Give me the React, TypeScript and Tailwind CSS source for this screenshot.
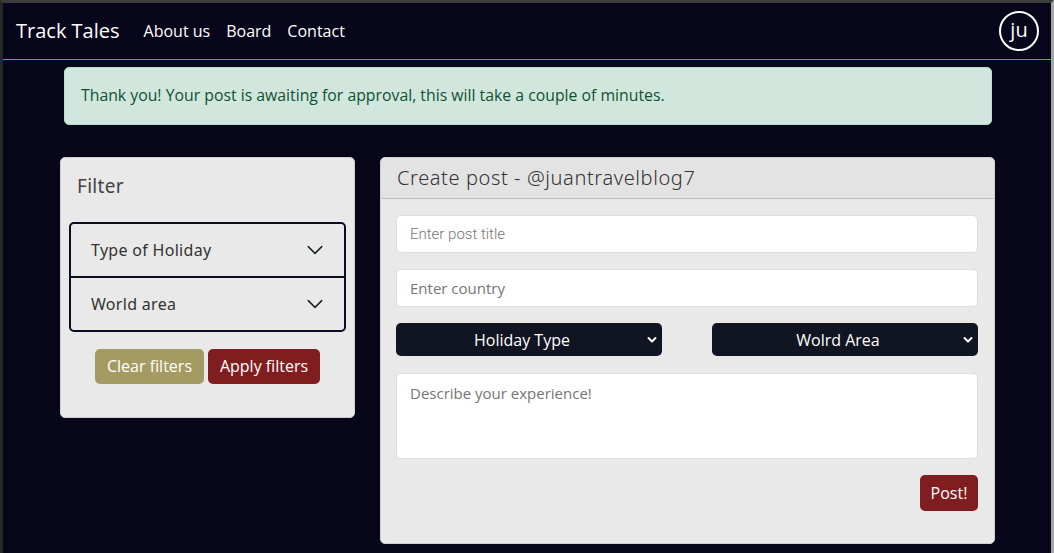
import React from "react";

const quick = { fontFamily: '"Open Sans", "Noto Sans", sans-serif' };
const mont = { fontFamily: '"Noto Sans", "Open Sans", sans-serif' };

function Chevron() {
  return (
    <svg width="18" height="18" viewBox="0 0 16 16" fill="none" stroke="#212529" strokeWidth="1.4" strokeLinecap="round" strokeLinejoin="round">
      <path d="M2 5l6 6 6-6" />
    </svg>
  );
}

function SmallChevron() {
  return (
    <svg width="10" height="8" viewBox="0 0 10 8" fill="none" stroke="#fff" strokeWidth="2" strokeLinecap="round" strokeLinejoin="round">
      <path d="M1.5 2l3.5 3.5L8.5 2" />
    </svg>
  );
}

function DarkSelect({ label }: { label: string }) {
  return (
    <div className="relative flex h-[33px] w-[266px] items-center justify-center rounded-[5px] bg-[#111522] pr-[14px] text-[16px] text-white">
      <span>{label}</span>
      <span className="absolute right-[5px] top-[13px] flex">
        <SmallChevron />
      </span>
    </div>
  );
}

export default function App() {
  return (
    <div
      className="h-[553px] w-[1054px] overflow-hidden border-t-[3px] border-r-[3px] border-l-[3px] border-t-[#3c3c3c] border-r-[#a6a6a6] border-l-[#262926] bg-[#07061a]"
      style={quick}
    >
      <nav className="flex h-[57px] items-center border-b border-[#c8704f] pl-[13px] pr-[12px] text-white">
        <span className="text-[20px]">Track Tales</span>
        <div className="ml-[24px] flex gap-[16px] text-[16px]">
          <span>About us</span>
          <span>Board</span>
          <span>Contact</span>
        </div>
        <div className="ml-auto flex h-[40px] w-[40px] items-center justify-center rounded-full border-2 border-white pb-[2px] text-[20px]">
          ju
        </div>
      </nav>

      <div className="ml-[61px] mt-[7px] flex h-[58px] w-[928px] items-center rounded-[5px] border border-[#badbcc] bg-[#d1e7dd] px-[16px] text-[15.8px] text-[#0f5132]">
        Thank you! Your post is awaiting for approval, this will take a couple of minutes.
      </div>

      <div className="ml-[57px] mt-[32px] flex items-start gap-[25px]">
        <div className="h-[261px] w-[295px] rounded-[5px] border border-[#d0d0d0] bg-[#e9e9e9] px-[8px]" style={mont}>
          <div className="pl-[8px] pt-[14px] text-[19px] tracking-[0.3px] text-[#444]">Filter</div>
          <div className="mt-[21px] overflow-hidden rounded-[5px] border-2 border-[#0c0c20]">
            <div className="flex h-[54px] items-center justify-between border-b-2 border-[#0c0c20] pl-[20px] pr-[20px] text-[16px] tracking-[0.3px] text-[#333]">
              <span>Type of Holiday</span>
              <Chevron />
            </div>
            <div className="flex h-[52px] items-center justify-between pl-[20px] pr-[20px] text-[16px] tracking-[0.3px] text-[#333]">
              <span>World area</span>
              <Chevron />
            </div>
          </div>
          <div className="mt-[17px] flex justify-center gap-[4px] text-[16px] text-white" style={quick}>
            <div className="flex h-[35px] w-[109px] items-center justify-center rounded-[5px] bg-[#a59b62]">Clear filters</div>
            <div className="flex h-[35px] w-[112px] items-center justify-center rounded-[5px] bg-[#801d1f]">Apply filters</div>
          </div>
        </div>

        <div className="h-[387px] w-[615px] overflow-hidden rounded-[5px] border border-[#d0d0d0] bg-[#e9e9e9]">
          <div className="flex h-[41px] items-center border-b border-[#bcbcbc] bg-[#e3e3e3] pl-[16px] text-[20px] font-light tracking-[0.6px] text-[#333]" style={mont}>
            Create post - @juantravelblog7
          </div>
          <div className="flex flex-col pl-[15px] pr-[16px] pt-[16px]">
            <div className="flex h-[38px] items-center rounded-[5px] border border-[#dedede] bg-white pl-[13px] text-[15px] text-[#757575]" style={{ fontFamily: "Roboto, sans-serif", fontWeight: 300 }}>
              Enter post title
            </div>
            <div className="mt-[16px] flex h-[38px] items-center rounded-[5px] border border-[#dedede] bg-white pl-[13px] text-[15px] text-[#757575]">
              Enter country
            </div>
            <div className="mt-[16px] flex justify-between">
              <DarkSelect label="Holiday Type" />
              <DarkSelect label="Wolrd Area" />
            </div>
            <div className="mt-[17px] h-[86px] rounded-[5px] border border-[#dedede] bg-white pl-[13px] pt-[8px] text-[15px] text-[#757575]">
              Describe your experience!
            </div>
            <div className="mt-[16px] flex justify-end">
              <div className="flex h-[36px] w-[58px] items-center justify-center rounded-[5px] bg-[#801d1f] text-[16px] text-white">
                Post!
              </div>
            </div>
          </div>
        </div>
      </div>
    </div>
  );
}
